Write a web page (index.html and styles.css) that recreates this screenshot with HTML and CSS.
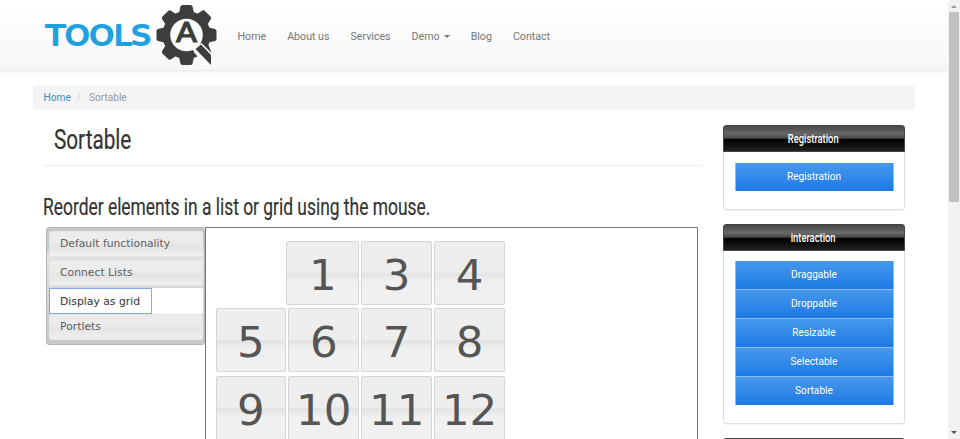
FILE: index.html
```html
<!DOCTYPE html>
<html lang="en">
<head>
<meta charset="utf-8">
<title>Sortable</title>
<link rel="stylesheet" href="styles.css">
</head>
<body>
<div class="page">
  <header class="header">
    <svg class="logo" viewBox="0 0 174 70" width="174" height="70" role="img">
      <text class="logo-word" x="2" y="44.500" textLength="105" lengthAdjust="spacingAndGlyphs">TOOLS</text>
      <g transform="translate(142.500 35)">
        <g fill="#3d3d3d">
          <circle r="24"/>
          <path id="tooth" d="M-8 -20L-6 -28.500Q-5.500 -30 -4 -30H4Q5.500 -30 6 -28.500L8 -20Z"/>
          <use href="#tooth" transform="rotate(45)"/>
          <use href="#tooth" transform="rotate(90)"/>
          <use href="#tooth" transform="rotate(180)"/>
          <use href="#tooth" transform="rotate(225)"/>
          <use href="#tooth" transform="rotate(270)"/>
          <use href="#tooth" transform="rotate(315)"/>
          <path d="M12 12L22 10L25 18V24Z"/>
        </g>
        <circle r="16.300" fill="#fbfbfb"/>
        <path d="M6 14L8 18L21 32H27V20L15 8Z" fill="#fafafa"/>
        <path d="M9 14L14.500 9.500L24.500 20V30Z" fill="#3d3d3d"/>
        <text class="logo-mark" x="-10.500" y="6.500" textLength="21" lengthAdjust="spacingAndGlyphs">A</text>
      </g>
    </svg>
    <nav class="nav">
      <a>Home</a><a>About us</a><a>Services</a><a>Demo<i class="caret"></i></a><a>Blog</a><a>Contact</a>
    </nav>
  </header>
  <div class="container">
    <div class="breadcrumb"><a>Home</a><i>/</i><span>Sortable</span></div>
    <div class="columns">
      <main class="main">
        <h1><span>Sortable</span></h1>
        <h2><span>Reorder elements in a list or grid using the mouse.</span></h2>
        <div class="demo">
          <ul class="tabs">
            <li>Default functionality</li>
            <li>Connect Lists</li>
            <li class="active"><a>Display as grid</a></li>
            <li>Portlets</li>
          </ul>
          <div class="panel">
            <div class="grid">
              <div class="empty"></div><div class="tile moved">1</div><div class="tile">3</div><div class="tile">4</div>
              <div class="tile">5</div><div class="tile">6</div><div class="tile">7</div><div class="tile">8</div>
              <div class="tile">9</div><div class="tile">10</div><div class="tile">11</div><div class="tile">12</div>
            </div>
          </div>
        </div>
      </main>
      <aside class="sidebar">
        <section class="widget registration">
          <h3><span>Registration</span></h3>
          <div class="links"><a>Registration</a></div>
        </section>
        <section class="widget">
          <h3><span>interaction</span></h3>
          <div class="links"><a>Draggable</a><a>Droppable</a><a>Resizable</a><a>Selectable</a><a>Sortable</a></div>
        </section>
        <section class="widget"><h3></h3></section>
      </aside>
    </div>
  </div>
</div>
<div class="scrollbar"><i class="up"></i><div class="thumb"></div><i class="down"></i></div>
</body>
</html>
```
FILE: styles.css
```css
* { box-sizing: border-box; }
html, body { margin: 0; height: 439px; overflow: hidden; }
body { display: flex; background: #fff; font: 10.15px/14px Roboto, sans-serif; color: #333; }
.page { width: 948px; height: 439px; overflow: hidden; }

.header {
  display: flex; height: 71px; padding-left: 44px;
  background: linear-gradient(#fff, #f7f7f7);
  border-bottom: 1px solid #ebebeb; box-shadow: 0 1px 3px rgba(0, 0, 0, .07);
}
.logo { flex: none; display: block; }
.logo-word { font: 27px "DejaVu Sans", sans-serif; fill: #20a1df; stroke: #20a1df; stroke-width: 1.8px; stroke-linejoin: round; }
.logo-mark { font: 27px "DejaVu Sans", sans-serif; fill: #3d3d3d; stroke: #3d3d3d; stroke-width: 1.2px; }
.nav { display: flex; gap: 21px; padding: 30px 0 0 19.500px; color: #777; font-size: 10.65px; }
.caret { display: inline-block; margin-left: 4px; vertical-align: 2px; border: 3px solid transparent; border-top-color: #777; border-bottom: 0; }

.container { width: 882px; margin: 14px 0 0 33px; }
.breadcrumb { display: flex; height: 25px; padding: 6px 10.500px; background: #f4f4f4; border-radius: 3px; color: #999; }
.breadcrumb a { color: #428bca; }
.breadcrumb i { margin: 0 8px 0 6px; color: #ccc; font-style: normal; }

.columns { display: flex; justify-content: space-between; padding: 0 10.500px; }
.main { width: 658px; }
h1, h2, h3 { margin: 0; font-weight: 400; white-space: nowrap; }
h1 span, h2 span, h3 span { display: inline-block; transform-origin: 0 50%; }
h1 { height: 56px; padding: 12px 0 0 10px; border-bottom: 1px solid #eee; font-size: 28px; line-height: 36px; -webkit-text-stroke: .2px #333; }
h1 span { transform: scaleX(.74); }
h2 { height: 61px; padding-top: 27px; font-size: 23px; line-height: 30px; -webkit-text-stroke: .2px #333; }
h2 span { transform: scaleX(.757); margin-left: -1px; }

.demo { display: flex; height: 230px; padding-left: 2px; }
.tabs {
  list-style: none; width: 159px; height: 118px; margin: 0; padding: 3px 1px 4px 2px;
  border: 1px solid #b5b5b5; border-radius: 3px;
  background: linear-gradient(#c8c8c8 0 20%, #e2e2e2 21%, #c8c8c8);
  color: #606060; font: 10.8px/26px "DejaVu Sans", sans-serif;
}
.tabs li {
  height: 26px; margin-bottom: 2.500px; padding-left: 10.500px; border-radius: 2px;
  background: linear-gradient(#ececec 0 46%, #e3e3e3 54%, #f0f0f0); border: 1px solid #e5e5e5;
  line-height: 24.500px; white-space: nowrap;
}
.tabs .active { padding: 0; margin-bottom: 0; background: #fff; border: 0; color: #333; }
.tabs .active a { display: block; width: 103px; height: 26px; padding-left: 10.500px; border: 1px solid #82aaf2; line-height: 25px; }
.panel { width: 493px; border: 1px solid #777; padding: 12.500px 0 0 10px; }
.grid { display: grid; grid-template-columns: repeat(4, 70.800px); grid-auto-rows: 64px; gap: 3.500px 2.100px; }
.tile {
  border: 1px solid #d6d6d6; border-radius: 2px;
  background: linear-gradient(#eee 0 48%, #e3e3e3 52%, #f0f0f0 64%);
  color: #555; font: 43.5px/66px "DejaVu Sans", sans-serif; text-align: center;
}
.moved { margin-left: -2px; }

.sidebar { width: 182px; padding-top: 15px; }
.widget { border: 1px solid #ddd; border-radius: 3px; margin-bottom: 14px; height: 200px; box-shadow: 0 1px 1px rgba(0, 0, 0, .05); }
.widget.registration { height: 84.500px; }
h3 {
  height: 27px; margin: -1px -1px 0; border: 1px solid #444; border-radius: 3px 3px 0 0;
  background: linear-gradient(#484848, #686868 32%, #444 49%, #000 54%, #222);
  color: #fff; font-size: 13px; font-weight: 500; line-height: 25px; text-align: center;
}
h3 span { transform: scaleX(.72); transform-origin: 50% 50%; }
.links { padding: 11px 10px 0 11px; }
.widget:not(.registration) .links { padding-top: 10.400px; }
.links a {
  display: block; height: 29px; background: linear-gradient(#4798ec, #1d7ae4);
  border: 1px solid #8bbcf3; border-width: 0 1px 1px; color: #fff; line-height: 27px; text-align: center;
}
.links a:last-child { height: 28px; border-bottom: 0; }

.scrollbar { display: flex; flex-direction: column; align-items: center; width: 12px; height: 439px; background: #f1f1f1; }
.thumb { width: 10px; height: 190px; background: #c1c1c1; }
.up, .down { border: 3px solid transparent; }
.up { margin: 5px 0 4px; border-top: 0; border-bottom-color: #999; }
.down { margin: auto 0 5px; border-bottom: 0; border-top-color: #555; }
```
